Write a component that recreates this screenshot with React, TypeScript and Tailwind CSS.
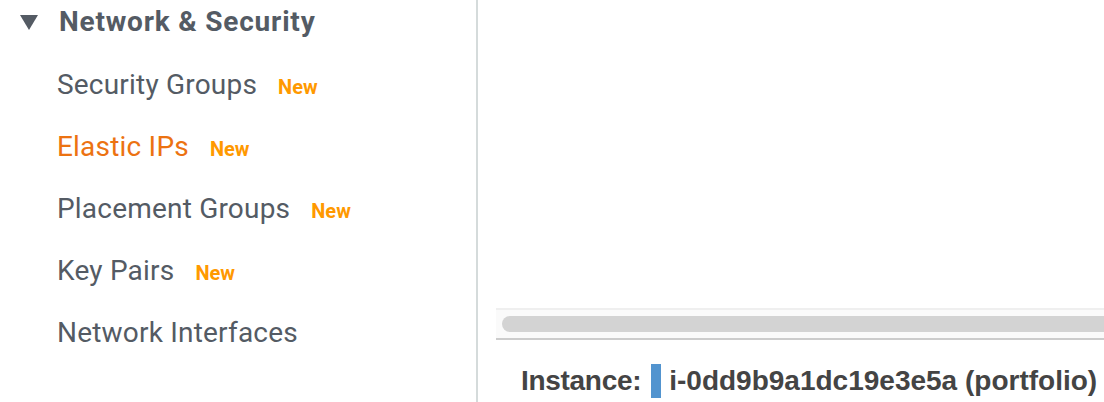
const items = [
  { label: 'Security Groups', isNew: true },
  { label: 'Elastic IPs', isNew: true, active: true },
  { label: 'Placement Groups', isNew: true },
  { label: 'Key Pairs', isNew: true },
  { label: 'Network Interfaces' },
];

export default function App() {
  return (
    <div className="flex h-[402px] w-[1104px] overflow-hidden bg-white">
      <aside className="w-[478px] shrink-0 border-r-2 border-[#d5dbdb] font-['Roboto',sans-serif]">
        <div className="flex h-[44px] items-center pl-[20px]">
          <svg width="18" height="15" viewBox="0 0 18 15" className="mr-[21px]">
            <polygon points="0,0 18,0 9,15" fill="#545b64" />
          </svg>
          <span className="text-[28px] font-bold tracking-[0.8px] text-[#545b64]">Network &amp; Security</span>
        </div>
        <ul className="mt-[10px]">
          {items.map((item) => (
            <li key={item.label} className="flex h-[62px] items-center pl-[57px]">
              <span className={`text-[28px] tracking-[0.2px] ${item.active ? 'text-[#ec7211]' : 'text-[#545b64]'}`}>
                {item.label}
              </span>
              {item.isNew && (
                <span className="ml-[21px] mt-[3px] text-[20px] font-bold text-[#ff9900]">New</span>
              )}
            </li>
          ))}
        </ul>
      </aside>

      <main className="ml-[18px] flex flex-1 flex-col">
        <div className="h-[308px]" />
        <div className="h-[32px] border-t-2 border-b-2 border-t-[#efefef] border-b-[#cccccc] bg-[#fafafa] pl-[6px] pt-[6px]">
          <div className="h-[16px] w-full rounded-l-full bg-[#d3d3d3]" />
        </div>
        <div className="flex items-center pl-[25px] pt-[24px] font-['Liberation_Sans',Arial,sans-serif] text-[28px] font-bold leading-[34px] text-[#444444]">
          <span className="tracking-[-0.3px]">Instance:</span>
          <span className="ml-[10px] mr-[8px] h-[34px] w-[10px] bg-[#5294cf]" />
          <span className="whitespace-nowrap">i-0dd9b9a1dc19e3e5a (portfolio)</span>
        </div>
      </main>
    </div>
  );
}
